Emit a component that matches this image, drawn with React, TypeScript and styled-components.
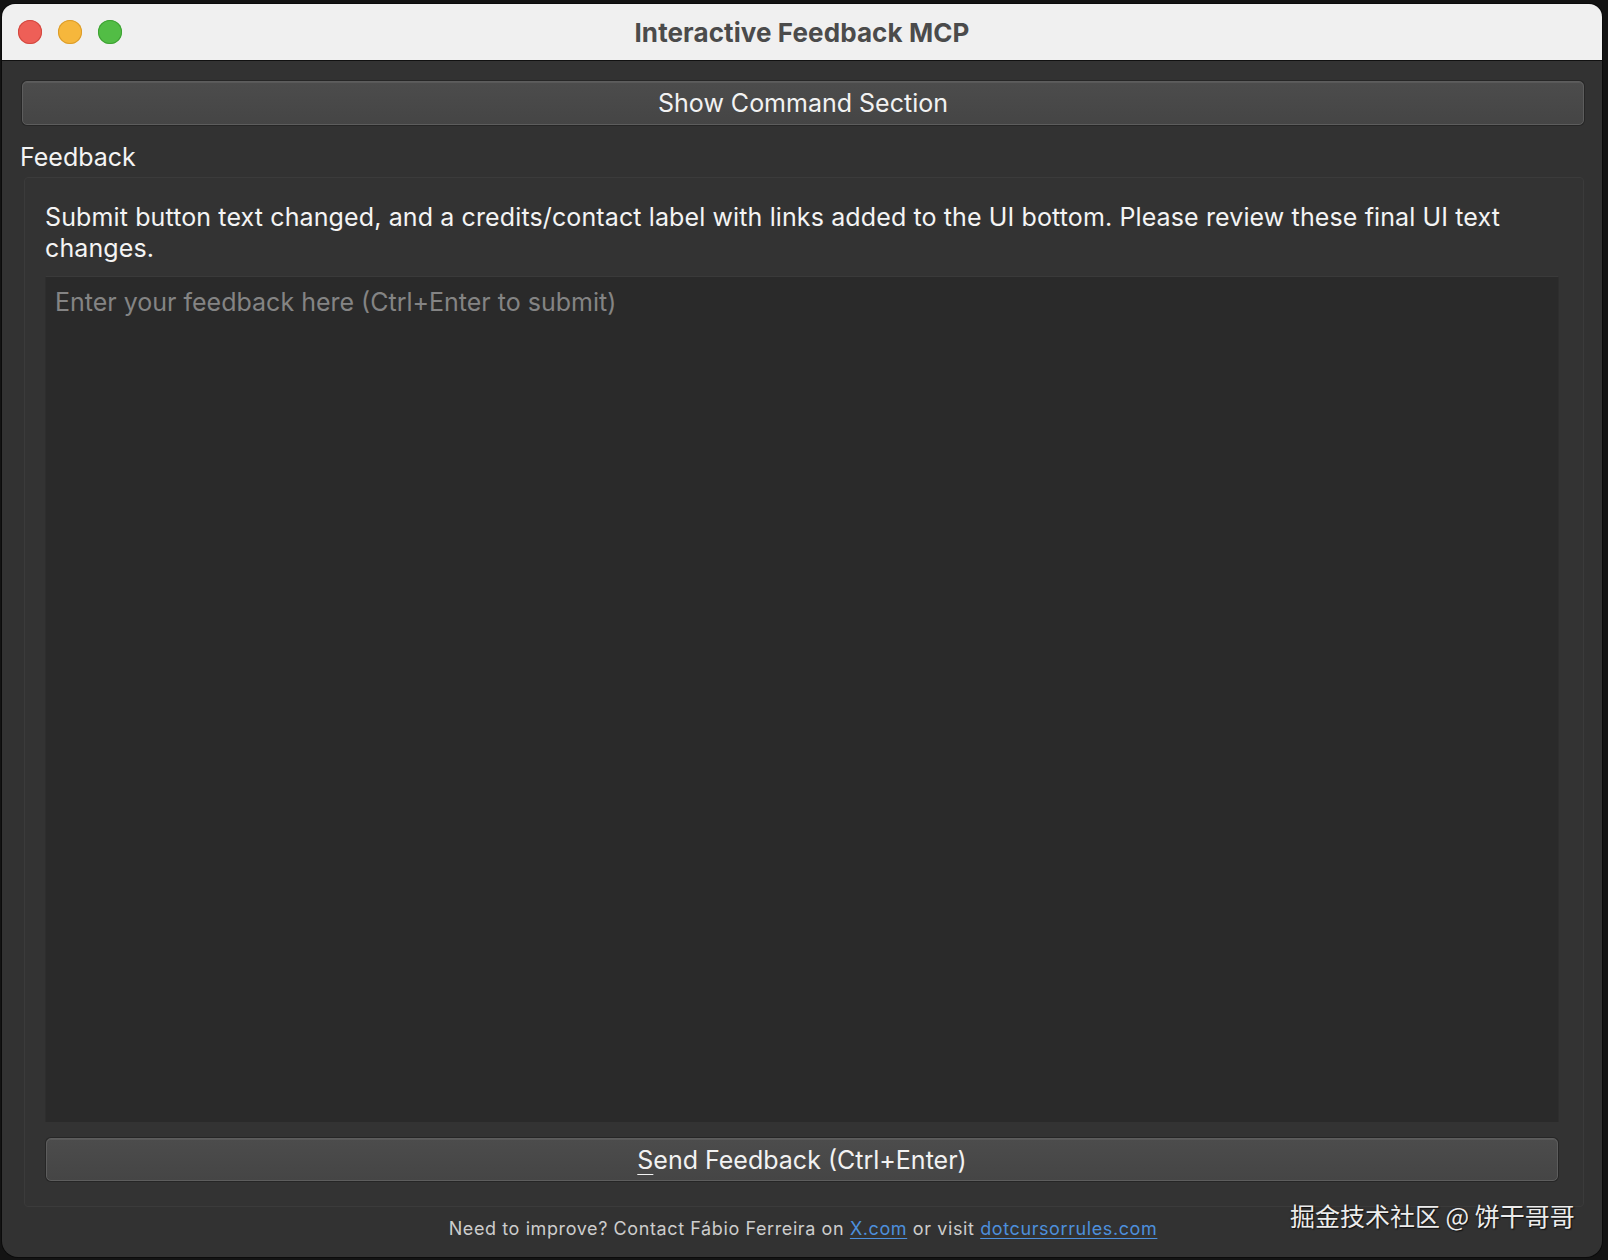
import styled, { createGlobalStyle } from 'styled-components';

const GlobalStyle = createGlobalStyle`
  html, body {
    margin: 0;
    padding: 0;
    background: #131313;
  }
  * {
    box-sizing: border-box;
  }
`;

const font = `Inter, "Noto Sans", "Liberation Sans", sans-serif`;

function App() {
  return (
    <>
      <GlobalStyle />
      <Screen>
        <Window>
          <TitleBar>
            <Lights>
              <Light color="#ee5f57" ring="#d2483f" />
              <Light color="#f6b73c" ring="#db9c2a" />
              <Light color="#52bd45" ring="#3ea133" />
            </Lights>
            <Title>Interactive Feedback MCP</Title>
          </TitleBar>
          <Body>
            <PushButton>Show Command Section</PushButton>
            <GroupLabel>Feedback</GroupLabel>
            <GroupBox>
              <Description>
                Submit button text changed, and a credits/contact label with links added to the UI bottom. Please
                review these final UI text changes.
              </Description>
              <FeedbackInput placeholder="Enter your feedback here (Ctrl+Enter to submit)" />
              <SendButton>
                <u>S</u>end Feedback (Ctrl+Enter)
              </SendButton>
            </GroupBox>
            <Footer>
              <span>
                Need to improve? Contact Fábio Ferreira on <Link>X.com</Link> or visit <Link>dotcursorrules.com</Link>
              </span>
            </Footer>
          </Body>
        </Window>
        <Watermark>掘金技术社区 @ 饼干哥哥</Watermark>
      </Screen>
    </>
  );
}

export default App;

const Screen = styled.div`
  position: relative;
  width: 1608px;
  height: 1260px;
  padding: 4px 6px 3px 2px;
  display: flex;
  font-family: ${font};
`;

const Window = styled.div`
  flex: 1;
  display: flex;
  flex-direction: column;
  border-radius: 13px 13px 16px 16px;
  overflow: hidden;
  background: #323232;
  box-shadow: 0 0 0 1px #0b0b0b;
`;

const TitleBar = styled.div`
  position: relative;
  height: 57px;
  flex-shrink: 0;
  background: #f0f0f0;
  border-bottom: 1px solid #111;
  display: flex;
  align-items: center;
  justify-content: center;
`;

const Lights = styled.div`
  position: absolute;
  left: 16px;
  top: 16px;
  display: flex;
  gap: 16px;
`;

const Light = styled.span<{ color: string; ring: string }>`
  width: 24px;
  height: 24px;
  border-radius: 50%;
  background: ${({ color }) => color};
  box-shadow: inset 0 0 0 1px ${({ ring }) => ring};
`;

const Title = styled.div`
  font-size: 26px;
  font-weight: 700;
  color: #4b4b4b;
  letter-spacing: 0.1px;
`;

const Body = styled.div`
  flex: 1;
  display: flex;
  flex-direction: column;
  padding: 20px 18px 0 20px;
`;

const PushButton = styled.button`
  height: 44px;
  width: 100%;
  flex-shrink: 0;
  border: 1px solid #5d5d5d;
  border-radius: 5px;
  background: linear-gradient(#4c4c4c, #454545);
  box-shadow: 0 0 0 1px #262626, inset 0 1px 0 #595959;
  color: #f2f2f2;
  font-family: ${font};
  font-size: 25px;
  padding: 0;
`;

const GroupLabel = styled.div`
  margin-top: 16px;
  margin-left: -2px;
  height: 32px;
  line-height: 32px;
  font-size: 25px;
  color: #f4f4f4;
`;

const GroupBox = styled.div`
  margin-top: 4px;
  margin-left: 2px;
  border: 1px solid #3b3b3b;
  border-radius: 4px;
  background: #333333;
  padding: 24px 24px 25px 20px;
  display: flex;
  flex-direction: column;
`;

const Description = styled.div`
  font-size: 25px;
  line-height: 31px;
  letter-spacing: 0.12px;
  color: #f4f4f4;
  margin-bottom: 12px;
`;

const FeedbackInput = styled.textarea`
  height: 846px;
  resize: none;
  background: #2a2a2a;
  border: none;
  border-top: 1px solid #3a3a3a;
  border-left: 1px solid #2e2e2e;
  border-right: 1px solid #2e2e2e;
  color: #eee;
  font-family: ${font};
  font-size: 25px;
  line-height: 31px;
  padding: 10px 9px;
  outline: none;

  &::placeholder {
    color: #848484;
  }
`;

const SendButton = styled(PushButton)`
  margin-top: 16px;
  margin-left: 1px;
  width: calc(100% - 2px);
  height: 43px;

  u {
    text-decoration-thickness: 1px;
    text-underline-offset: 5px;
  }
`;

const Footer = styled.div`
  flex: 1;
  display: flex;
  align-items: center;
  justify-content: center;
  font-size: 18px;
  color: #cdcdcd;
  letter-spacing: 0.6px;
  padding-bottom: 7px;
  padding-left: 0;
`;

const Link = styled.span`
  color: #4d8fdc;
  text-decoration: underline;
  text-underline-offset: 3px;
`;

const Watermark = styled.div`
  position: absolute;
  left: 1290px;
  top: 1197px;
  font-family: "Noto Sans CJK SC", sans-serif;
  font-size: 25px;
  line-height: 36px;
  color: #ececec;
  text-shadow: 1px 1px 1px #111, 0 0 2px #222;
  white-space: nowrap;
`;
